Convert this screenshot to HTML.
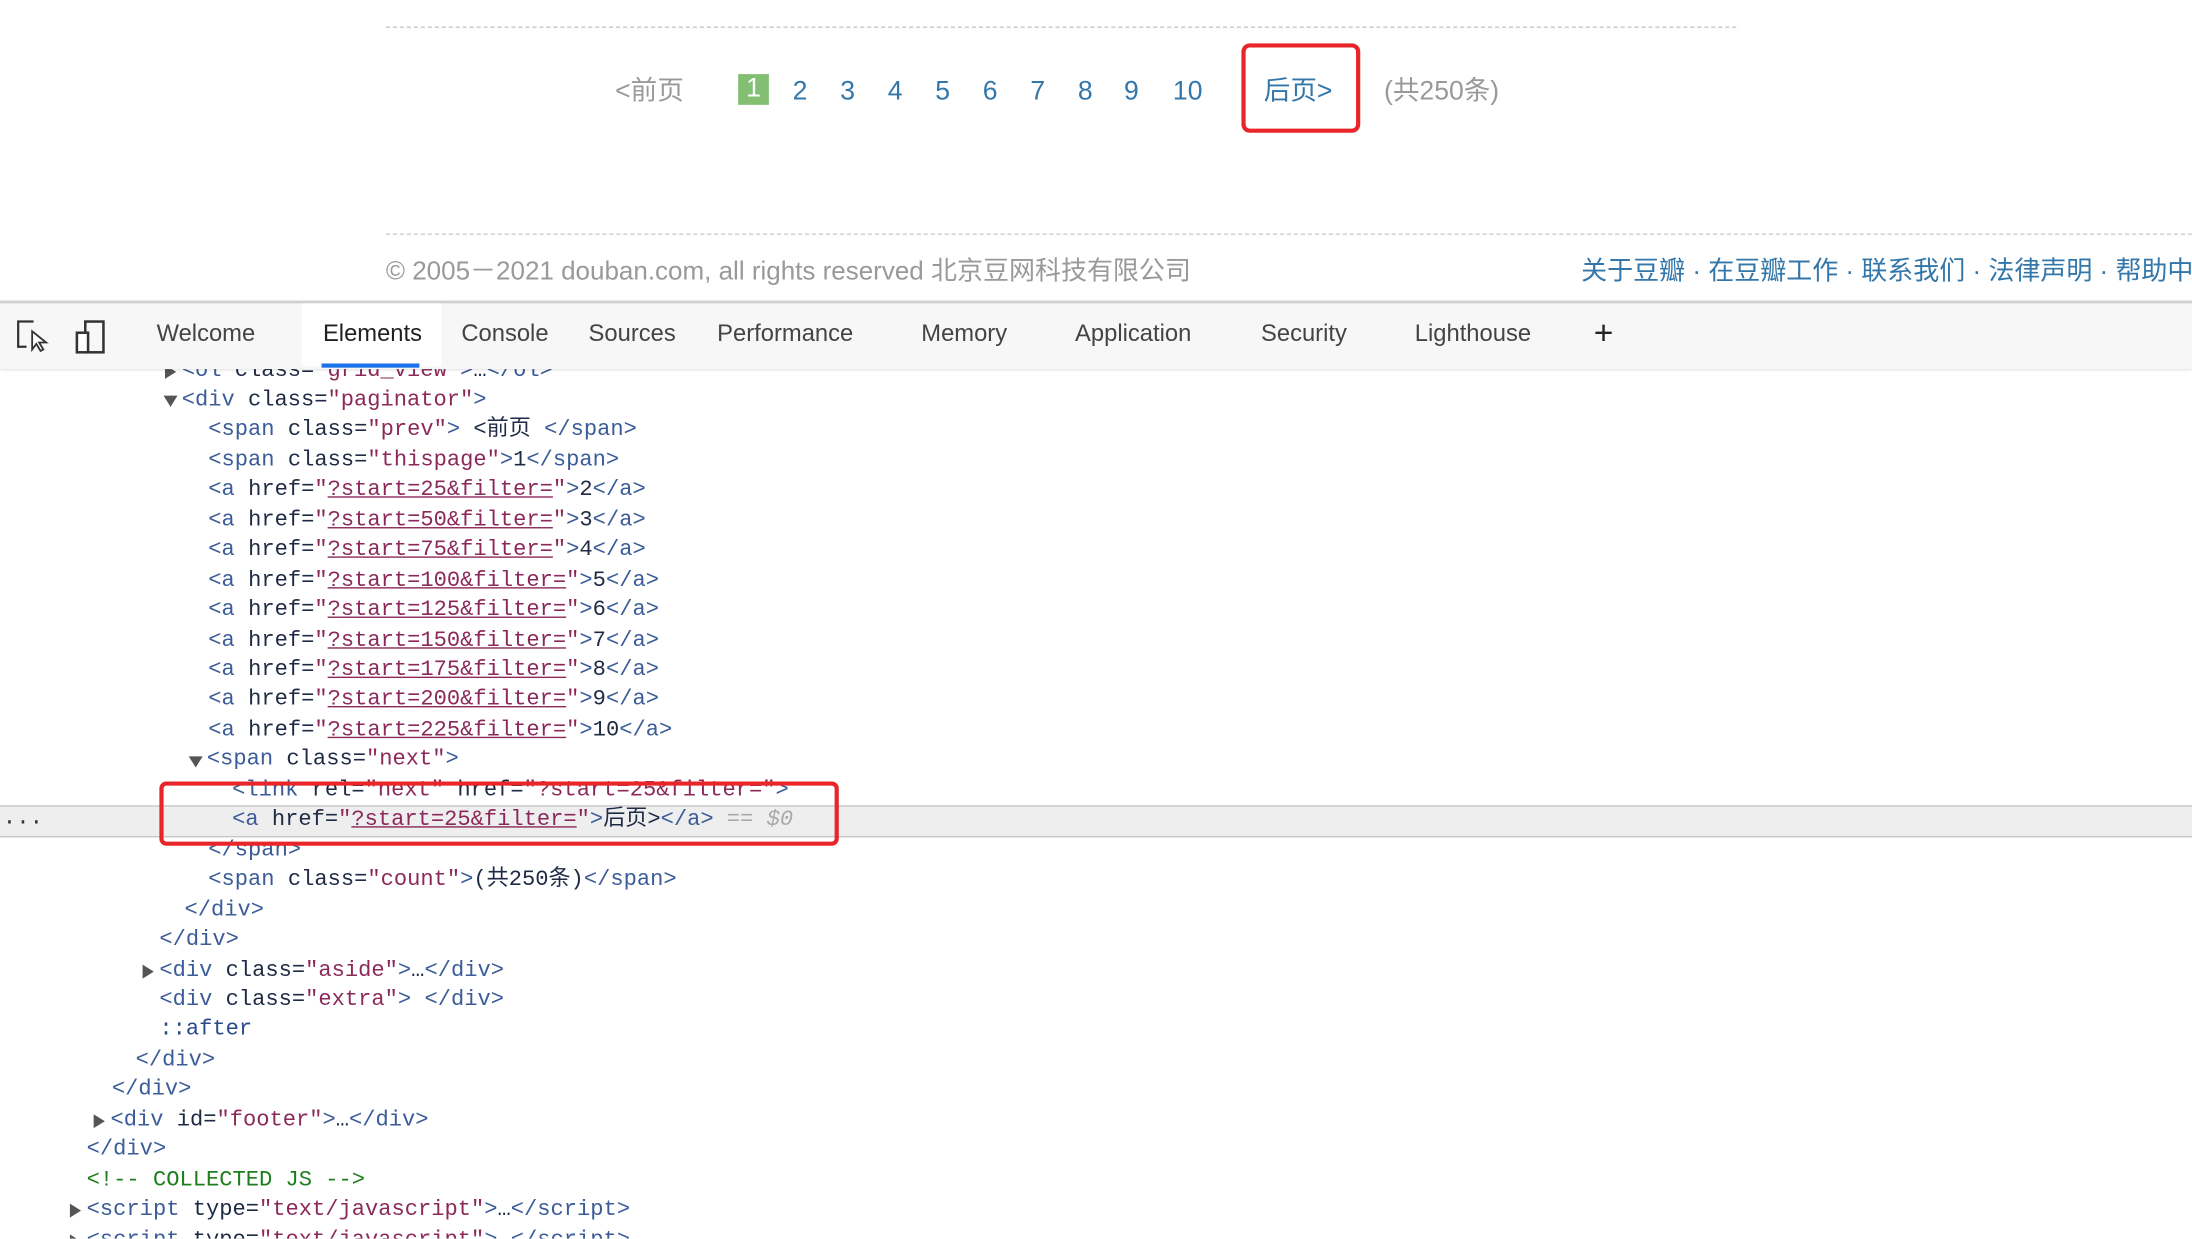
<!DOCTYPE html>
<html><head><meta charset="utf-8"><style>
html,body{margin:0;padding:0;background:#fff;overflow:hidden}
#s{position:absolute;left:0;top:0;width:1568px;height:886px;transform:scale(1.398);transform-origin:0 0;overflow:hidden;font-family:"Liberation Sans","Noto Sans CJK SC",sans-serif}
.ab{position:absolute;white-space:nowrap}
.dash{position:absolute;height:0;border-top:1px dashed #ccc}
.pg{font-size:19px;top:54px;line-height:24px;height:24px;color:#37a}
#tb{position:absolute;left:0;top:215px;width:1568px;height:47px;background:#f7f7f7;border-top:2px solid #d0d0d0;box-shadow:0 1px 2px rgba(0,0,0,.12);z-index:2}
.tab{position:absolute;top:12px;font-size:17px;color:#444}
#code{position:absolute;left:0;top:254.5px;width:1568px;font-family:"Liberation Mono","Noto Sans CJK SC",monospace;font-size:15.8px;line-height:21.45px;color:#1f2a44}
.l{position:absolute;white-space:pre;height:21.45px}
.t{color:#3b5c98}.v{color:#8b2a5a}.u{color:#8b2a5a;text-decoration:underline}.c{color:#1e7e1e}
.tri{position:absolute;width:0;height:0}
.tr{border-top:5px solid transparent;border-bottom:5px solid transparent;border-left:8px solid #555}
.td{border-left:5px solid transparent;border-right:5px solid transparent;border-top:8px solid #555}
</style></head><body><div id="s">
<div class="dash" style="left:276px;top:19px;width:966px"></div>
<div class="ab pg" style="left:440px;color:#999">&lt;前页</div>
<div class="ab" style="left:528px;top:53px;width:22px;height:22px;background:#83bf73;color:#fff;font-size:19px;text-align:center;line-height:22px">1</div>
<div class="ab pg" style="left:567px">2</div>
<div class="ab pg" style="left:601px">3</div>
<div class="ab pg" style="left:635px">4</div>
<div class="ab pg" style="left:669px">5</div>
<div class="ab pg" style="left:703px">6</div>
<div class="ab pg" style="left:737px">7</div>
<div class="ab pg" style="left:771px">8</div>
<div class="ab pg" style="left:804px">9</div>
<div class="ab pg" style="left:839px">10</div>
<div class="ab" style="left:888px;top:31px;width:79px;height:58px;border:3px solid #e8262a;border-radius:6px"></div>
<div class="ab pg" style="left:904px">后页&gt;</div>
<div class="ab pg" style="left:990px;color:#999">(共250条)</div>
<div class="dash" style="left:276px;top:167px;width:1292px"></div>
<div class="ab" style="left:276px;top:179px;font-size:18.6px;color:#999">© 2005－2021 douban.com, all rights reserved 北京豆网科技有限公司</div>
<div class="ab" style="left:1131px;top:179px;font-size:18.6px;color:#37a">关于豆瓣 · 在豆瓣工作 · 联系我们 · 法律声明 · 帮助中心</div>

<div id="tb">
<svg class="ab" style="left:11px;top:11px" width="24" height="24" viewBox="0 0 24 24"><path d="M13 2H2v18h6" fill="none" stroke="#333" stroke-width="1.6"/><path d="M12 9l0 13 3-4 3 5 2-1-3-5 5 0z" fill="#fff" stroke="#333" stroke-width="1.3"/></svg>
<svg class="ab" style="left:53px;top:11px" width="24" height="26" viewBox="0 0 24 26"><rect x="8" y="2" width="13" height="22" fill="none" stroke="#333" stroke-width="1.8"/><rect x="2" y="10" width="8" height="14" fill="#fff" stroke="#333" stroke-width="1.8"/></svg>
<div class="ab" style="left:216px;top:0;width:100px;height:45px;background:#fff"></div>
<div class="ab" style="left:230px;top:43px;width:70px;height:3px;background:#1a73e8"></div>
<div class="tab" style="left:112px">Welcome</div>
<div class="tab" style="left:231px;color:#222">Elements</div>
<div class="tab" style="left:330px">Console</div>
<div class="tab" style="left:421px">Sources</div>
<div class="tab" style="left:513px">Performance</div>
<div class="tab" style="left:659px">Memory</div>
<div class="tab" style="left:769px">Application</div>
<div class="tab" style="left:902px">Security</div>
<div class="tab" style="left:1012px">Lighthouse</div>
<div class="tab" style="left:1140px;top:8px;font-size:24px;color:#222">+</div>
</div>

<div class="ab" style="left:0;top:576px;width:1568px;height:21px;background:#eeeeee;border-top:1px solid #c8c8c8;border-bottom:1px solid #c8c8c8"></div>
<div class="ab" style="left:2px;top:576px;font-size:16px;color:#333;font-family:'Liberation Mono',monospace">...</div>
<div class="ab" style="left:114px;top:559px;width:480px;height:40px;border:3px solid #e8262a;border-radius:5px;z-index:1"></div>

<div id="code">
<div class="l" style="top:0;left:130px"><span class="t">&lt;ol</span> class=<span class="v">"grid_view"</span><span class="t">&gt;</span>…<span class="t">&lt;/ol&gt;</span></div>
<div class="tri tr" style="left:118px;top:6px"></div>
<div class="l" style="top:21.45px;left:130px"><span class="t">&lt;div</span> class=<span class="v">"paginator"</span><span class="t">&gt;</span></div>
<div class="tri td" style="left:117px;top:28px"></div>
<div class="l" style="top:42.9px;left:149px"><span class="t">&lt;span</span> class=<span class="v">"prev"</span><span class="t">&gt;</span> &lt;前页 <span class="t">&lt;/span&gt;</span></div>
<div class="l" style="top:64.35px;left:149px"><span class="t">&lt;span</span> class=<span class="v">"thispage"</span><span class="t">&gt;</span>1<span class="t">&lt;/span&gt;</span></div>
<div class="l" style="top:85.8px;left:149px"><span class="t">&lt;a</span> href=<span class="v">"</span><span class="u">?start=25&amp;filter=</span><span class="v">"</span><span class="t">&gt;</span>2<span class="t">&lt;/a&gt;</span></div>
<div class="l" style="top:107.25px;left:149px"><span class="t">&lt;a</span> href=<span class="v">"</span><span class="u">?start=50&amp;filter=</span><span class="v">"</span><span class="t">&gt;</span>3<span class="t">&lt;/a&gt;</span></div>
<div class="l" style="top:128.7px;left:149px"><span class="t">&lt;a</span> href=<span class="v">"</span><span class="u">?start=75&amp;filter=</span><span class="v">"</span><span class="t">&gt;</span>4<span class="t">&lt;/a&gt;</span></div>
<div class="l" style="top:150.15px;left:149px"><span class="t">&lt;a</span> href=<span class="v">"</span><span class="u">?start=100&amp;filter=</span><span class="v">"</span><span class="t">&gt;</span>5<span class="t">&lt;/a&gt;</span></div>
<div class="l" style="top:171.6px;left:149px"><span class="t">&lt;a</span> href=<span class="v">"</span><span class="u">?start=125&amp;filter=</span><span class="v">"</span><span class="t">&gt;</span>6<span class="t">&lt;/a&gt;</span></div>
<div class="l" style="top:193.05px;left:149px"><span class="t">&lt;a</span> href=<span class="v">"</span><span class="u">?start=150&amp;filter=</span><span class="v">"</span><span class="t">&gt;</span>7<span class="t">&lt;/a&gt;</span></div>
<div class="l" style="top:214.5px;left:149px"><span class="t">&lt;a</span> href=<span class="v">"</span><span class="u">?start=175&amp;filter=</span><span class="v">"</span><span class="t">&gt;</span>8<span class="t">&lt;/a&gt;</span></div>
<div class="l" style="top:235.95px;left:149px"><span class="t">&lt;a</span> href=<span class="v">"</span><span class="u">?start=200&amp;filter=</span><span class="v">"</span><span class="t">&gt;</span>9<span class="t">&lt;/a&gt;</span></div>
<div class="l" style="top:257.4px;left:149px"><span class="t">&lt;a</span> href=<span class="v">"</span><span class="u">?start=225&amp;filter=</span><span class="v">"</span><span class="t">&gt;</span>10<span class="t">&lt;/a&gt;</span></div>
<div class="l" style="top:278.85px;left:148px"><span class="t">&lt;span</span> class=<span class="v">"next"</span><span class="t">&gt;</span></div>
<div class="tri td" style="left:135px;top:286px"></div>
<div class="l" style="top:300.3px;left:166px"><span class="t">&lt;link</span> rel=<span class="v">"next"</span> href=<span class="v">"?start=25&amp;filter="</span><span class="t">&gt;</span></div>
<div class="l" style="top:321.75px;left:166px"><span class="t">&lt;a</span> href=<span class="v">"</span><span class="u">?start=25&amp;filter=</span><span class="v">"</span><span class="t">&gt;</span>后页&gt;<span class="t">&lt;/a&gt;</span> <span style="color:#aaa;font-style:italic">== $0</span></div>
<div class="l" style="top:343.2px;left:149px"><span class="t">&lt;/span&gt;</span></div>
<div class="l" style="top:364.65px;left:149px"><span class="t">&lt;span</span> class=<span class="v">"count"</span><span class="t">&gt;</span>(共250条)<span class="t">&lt;/span&gt;</span></div>
<div class="l" style="top:386.1px;left:132px"><span class="t">&lt;/div&gt;</span></div>
<div class="l" style="top:407.55px;left:114px"><span class="t">&lt;/div&gt;</span></div>
<div class="l" style="top:429px;left:114px"><span class="t">&lt;div</span> class=<span class="v">"aside"</span><span class="t">&gt;</span>…<span class="t">&lt;/div&gt;</span></div>
<div class="tri tr" style="left:102px;top:435px"></div>
<div class="l" style="top:450.45px;left:114px"><span class="t">&lt;div</span> class=<span class="v">"extra"</span><span class="t">&gt;</span> <span class="t">&lt;/div&gt;</span></div>
<div class="l" style="top:471.9px;left:114px;color:#2a4a8a">::after</div>
<div class="l" style="top:493.35px;left:97px"><span class="t">&lt;/div&gt;</span></div>
<div class="l" style="top:514.8px;left:80px"><span class="t">&lt;/div&gt;</span></div>
<div class="l" style="top:536.25px;left:79px"><span class="t">&lt;div</span> id=<span class="v">"footer"</span><span class="t">&gt;</span>…<span class="t">&lt;/div&gt;</span></div>
<div class="tri tr" style="left:67px;top:542px"></div>
<div class="l" style="top:557.7px;left:62px"><span class="t">&lt;/div&gt;</span></div>
<div class="l c" style="top:579.15px;left:62px">&lt;!-- COLLECTED JS --&gt;</div>
<div class="l" style="top:600.6px;left:62px"><span class="t">&lt;script</span> type=<span class="v">"text/javascript"</span><span class="t">&gt;</span>…<span class="t">&lt;/script&gt;</span></div>
<div class="tri tr" style="left:50px;top:606px"></div>
<div class="l" style="top:622.05px;left:62px"><span class="t">&lt;script</span> type=<span class="v">"text/javascript"</span><span class="t">&gt;</span>…<span class="t">&lt;/script&gt;</span></div>
<div class="tri tr" style="left:50px;top:628px"></div>
</div>
</div></body></html>
